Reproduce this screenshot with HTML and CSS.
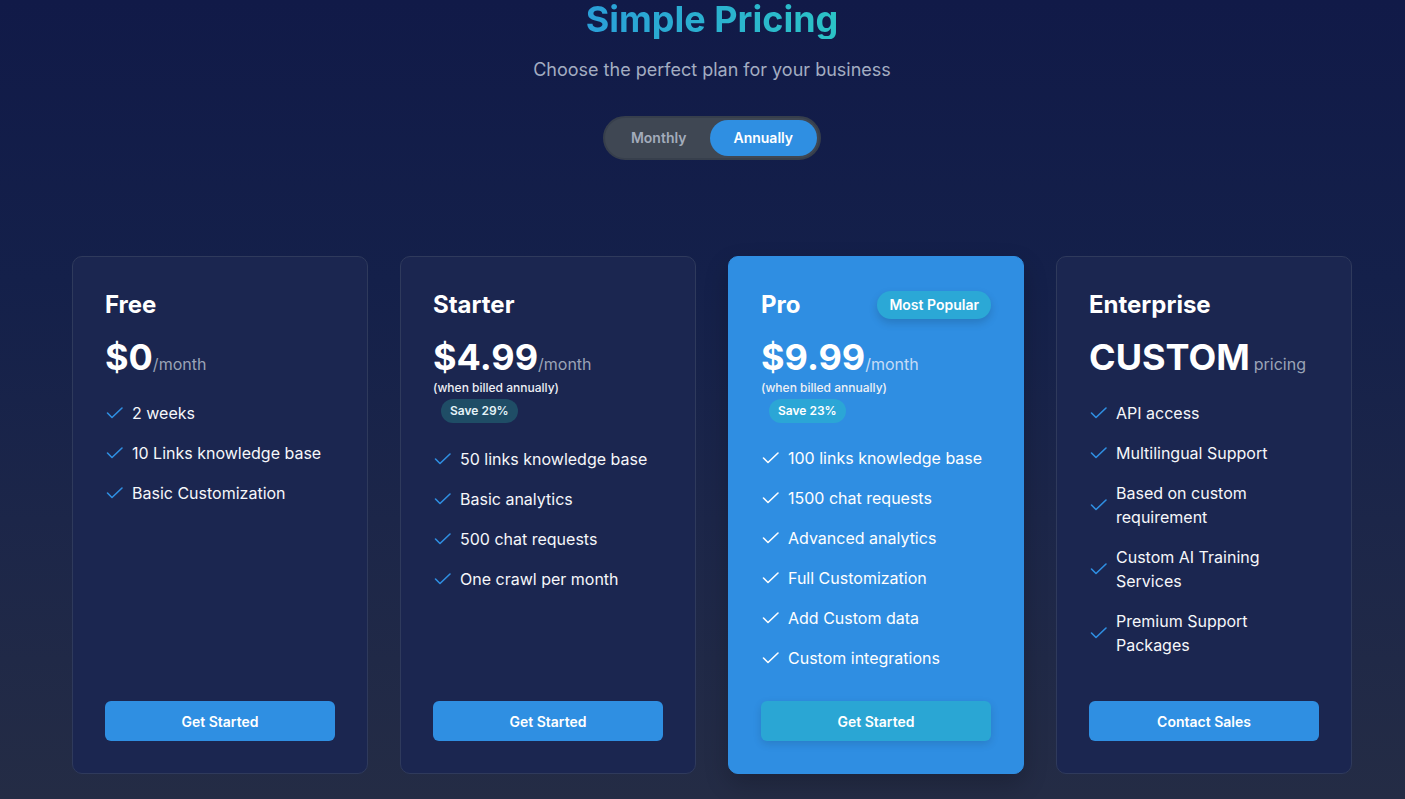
FILE: index.html
```html
<!DOCTYPE html>
<html lang="en">
<head>
<meta charset="utf-8">
<title>Simple Pricing</title>
<link rel="stylesheet" href="styles.css">
</head>
<body>
<main class="page">
  <header class="intro">
    <h1 class="title">Simple Pricing</h1>
    <p class="subtitle">Choose the perfect plan for your business</p>
    <div class="toggle">
      <button class="toggle-btn">Monthly</button>
      <button class="toggle-btn active">Annually</button>
    </div>
  </header>

  <section class="plans">
    <article class="card">
      <div class="card-head"><h2 class="plan-name">Free</h2></div>
      <div class="price"><span class="amount">$0</span><span class="per">/month</span></div>
      <ul class="features">
        <li><svg class="check" viewBox="0 0 20 20"><path d="M2.5 10 L7 14.5 L17 5"/></svg><span>2 weeks</span></li>
        <li><svg class="check" viewBox="0 0 20 20"><path d="M2.5 10 L7 14.5 L17 5"/></svg><span>10 Links knowledge base</span></li>
        <li><svg class="check" viewBox="0 0 20 20"><path d="M2.5 10 L7 14.5 L17 5"/></svg><span>Basic Customization</span></li>
      </ul>
      <button class="cta">Get Started</button>
    </article>

    <article class="card">
      <div class="card-head"><h2 class="plan-name">Starter</h2></div>
      <div class="price"><span class="amount">$4.99</span><span class="per">/month</span></div>
      <p class="billed">(when billed annually)</p>
      <span class="save">Save 29%</span>
      <ul class="features">
        <li><svg class="check" viewBox="0 0 20 20"><path d="M2.5 10 L7 14.5 L17 5"/></svg><span>50 links knowledge base</span></li>
        <li><svg class="check" viewBox="0 0 20 20"><path d="M2.5 10 L7 14.5 L17 5"/></svg><span>Basic analytics</span></li>
        <li><svg class="check" viewBox="0 0 20 20"><path d="M2.5 10 L7 14.5 L17 5"/></svg><span>500 chat requests</span></li>
        <li><svg class="check" viewBox="0 0 20 20"><path d="M2.5 10 L7 14.5 L17 5"/></svg><span>One crawl per month</span></li>
      </ul>
      <button class="cta">Get Started</button>
    </article>

    <article class="card card-pro">
      <div class="card-head">
        <h2 class="plan-name">Pro</h2>
        <span class="popular">Most Popular</span>
      </div>
      <div class="price"><span class="amount">$9.99</span><span class="per">/month</span></div>
      <p class="billed">(when billed annually)</p>
      <span class="save">Save 23%</span>
      <ul class="features">
        <li><svg class="check" viewBox="0 0 20 20"><path d="M2.5 10 L7 14.5 L17 5"/></svg><span>100 links knowledge base</span></li>
        <li><svg class="check" viewBox="0 0 20 20"><path d="M2.5 10 L7 14.5 L17 5"/></svg><span>1500 chat requests</span></li>
        <li><svg class="check" viewBox="0 0 20 20"><path d="M2.5 10 L7 14.5 L17 5"/></svg><span>Advanced analytics</span></li>
        <li><svg class="check" viewBox="0 0 20 20"><path d="M2.5 10 L7 14.5 L17 5"/></svg><span>Full Customization</span></li>
        <li><svg class="check" viewBox="0 0 20 20"><path d="M2.5 10 L7 14.5 L17 5"/></svg><span>Add Custom data</span></li>
        <li><svg class="check" viewBox="0 0 20 20"><path d="M2.5 10 L7 14.5 L17 5"/></svg><span>Custom integrations</span></li>
      </ul>
      <button class="cta">Get Started</button>
    </article>

    <article class="card">
      <div class="card-head"><h2 class="plan-name">Enterprise</h2></div>
      <div class="price"><span class="amount">CUSTOM</span><span class="per per-gap">pricing</span></div>
      <ul class="features">
        <li><svg class="check" viewBox="0 0 20 20"><path d="M2.5 10 L7 14.5 L17 5"/></svg><span>API access</span></li>
        <li><svg class="check" viewBox="0 0 20 20"><path d="M2.5 10 L7 14.5 L17 5"/></svg><span>Multilingual Support</span></li>
        <li><svg class="check" viewBox="0 0 20 20"><path d="M2.5 10 L7 14.5 L17 5"/></svg><span>Based on custom requirement</span></li>
        <li><svg class="check" viewBox="0 0 20 20"><path d="M2.5 10 L7 14.5 L17 5"/></svg><span>Custom AI Training Services</span></li>
        <li><svg class="check" viewBox="0 0 20 20"><path d="M2.5 10 L7 14.5 L17 5"/></svg><span>Premium Support Packages</span></li>
      </ul>
      <button class="cta">Contact Sales</button>
    </article>
  </section>
</main>
</body>
</html>
```

FILE: styles.css
```css
* { box-sizing: border-box; }

html, body {
  margin: 0;
  padding: 0;
  height: 100%;
}

body {
  font-family: "Inter", "Noto Sans", "Liberation Sans", sans-serif;
  color: #ffffff;
  background: linear-gradient(180deg, #111a48 0%, #14204a 35%, #1c2649 65%, #242c45 100%);
  overflow: hidden;
}

.page {
  padding: 0 53px 0 72px;
}

.intro {
  display: flex;
  flex-direction: column;
  align-items: center;
}

.title {
  margin: -1px 0 0;
  font-size: 36px;
  line-height: 40px;
  font-weight: 700;
  background: linear-gradient(90deg, #2a9fd8 0%, #2bc3c6 100%);
  -webkit-background-clip: text;
  background-clip: text;
  color: transparent;
}

.subtitle {
  margin: 17px 0 0;
  font-size: 18px;
  line-height: 28px;
  color: #a3adc2;
}

.toggle {
  margin-top: 32px;
  display: flex;
  padding: 2px;
  border: 2px solid #373f4c;
  background: #3f4753;
  border-radius: 999px;
}

.toggle-btn {
  font-family: inherit;
  font-size: 14px;
  font-weight: 600;
  line-height: 20px;
  padding: 8px 23.5px;
  border: 0;
  border-radius: 999px;
  background: transparent;
  color: #a3acbb;
}

.toggle-btn.active {
  background: #2f8fe2;
  color: #ffffff;
}

.plans {
  margin-top: 96px;
  display: grid;
  grid-template-columns: repeat(4, 1fr);
  gap: 32px;
}

.card {
  height: 518px;
  display: flex;
  flex-direction: column;
  align-items: flex-start;
  padding: 32px;
  background: #1b2650;
  border: 1px solid #2f3a5c;
  border-radius: 10px;
}

.card-pro {
  background: #2f8ee2;
  border-color: #2f8ee2;
  box-shadow: 0 10px 24px rgba(0, 0, 0, 0.2);
}

.card-head {
  align-self: stretch;
  display: flex;
  align-items: center;
  justify-content: space-between;
}

.plan-name {
  margin: 0;
  font-size: 24px;
  line-height: 32px;
  font-weight: 700;
}

.popular {
  font-size: 14px;
  line-height: 20px;
  font-weight: 600;
  padding: 4px 12px;
  border-radius: 999px;
  background: #2ba8d6;
  box-shadow: 0 4px 8px rgba(0, 0, 0, 0.15);
}

.price {
  margin-top: 16px;
  display: flex;
  align-items: baseline;
}

.amount {
  font-size: 36px;
  line-height: 40px;
  font-weight: 700;
}

.per {
  font-size: 16px;
  color: #9aa3b6;
}

.per-gap { margin-left: 4px; }

.card-pro .per { color: #c6dcf6; }

.billed {
  margin: 3px 0 0;
  font-size: 12px;
  line-height: 16px;
  font-weight: 500;
  color: #eef0f5;
}

.save {
  margin: 3px 0 0 8px;
  font-size: 12px;
  line-height: 16px;
  font-weight: 600;
  padding: 4px 9px;
  border-radius: 999px;
  background: #1f4d66;
  color: #e4f3f8;
}

.card-pro .save {
  background: #2ba6d6;
  color: #ffffff;
}

.features {
  list-style: none;
  margin: 24px 0 0;
  padding: 0;
  flex: 1;
  display: flex;
  flex-direction: column;
  gap: 16px;
  font-size: 16px;
  line-height: 24px;
  font-weight: 400;
  color: #f6f7fa;
}

.card-pro .features { color: #ffffff; margin-top: 23px; }

.features li {
  display: flex;
  align-items: center;
  gap: 7px;
}

.check {
  flex: none;
  width: 20px;
  height: 20px;
  fill: none;
  stroke: #2f8fe2;
  stroke-width: 1.6;
  stroke-linecap: round;
  stroke-linejoin: round;
}

.card-pro .check { stroke: #ffffff; }

.cta {
  align-self: stretch;
  height: 40px;
  border: 0;
  border-radius: 6px;
  background: #2f8fe2;
  color: #ffffff;
  font-family: inherit;
  font-size: 14px;
  font-weight: 600;
}

.card-pro .cta {
  background: #2aa6d4;
  box-shadow: 0 3px 8px rgba(0, 0, 0, 0.12);
}
```
